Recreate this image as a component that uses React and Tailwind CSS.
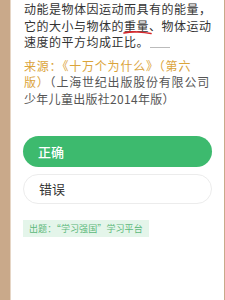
import React from 'react';

const cjk = { fontFamily: '"Noto Sans CJK SC", "Noto Sans", sans-serif' };

export default function App() {
  return (
    <div className="w-[225px] h-[300px] bg-[#c9a98a] flex pl-[10px] pr-[11px] overflow-hidden" style={cjk}>
      <div className="flex-1 bg-white border-l border-[#e6d6c6] flex flex-col px-[12px]">
        {/* question text */}
        <div className="pl-[1px] pt-[1px] text-[12px] leading-[16.5px] tracking-[0.5px] text-[#333] whitespace-nowrap">
          <div>动能是物体因运动而具有的能量，</div>
          <div>
            它的大小与物体的
            <span className="relative">
              重量
              <svg className="absolute left-[-1px] top-[13px]" width="29" height="5" viewBox="0 0 29 5">
                <path d="M1 3 Q8 1.5 15 2 T28 3.5" stroke="#d7262b" strokeWidth="1.6" fill="none" strokeLinecap="round" />
              </svg>
            </span>
            、物体运动
          </div>
          <div className="flex items-center">
            速度的平方均成正比。
            <span className="inline-block w-[20px] h-[1px] bg-[#bbb] mt-[10px] ml-[1px]" />
          </div>
        </div>

        {/* source */}
        <div className="mt-[7px] pl-[1px] text-[12px] leading-[16.5px] tracking-[0.8px] whitespace-nowrap">
          <div className="text-[#dba43a]">来源：《十万个为什么》（第六</div>
          <div>
            <span className="text-[#dba43a]">版）</span>
            <span className="text-[#555]">（上海世纪出版股份有限公司</span>
          </div>
          <div className="text-[#555] tracking-[0.3px]">少年儿童出版社2014年版）</div>
        </div>

        {/* options */}
        <button className="mt-[29px] h-[31px] w-full rounded-full bg-[#3dba6e] text-white text-[13px] font-medium text-left pl-[15px]">
          正确
        </button>
        <button className="mt-[7px] h-[30px] w-full rounded-full bg-white border border-[#ececec] text-[#333] text-[13px] text-left pl-[15px]">
          错误
        </button>

        {/* tag */}
        <div className="mt-[16px] self-start h-[17px] flex items-center px-[6px] bg-[#e4f5ea] text-[#5cb87a] text-[9px] tracking-[0.1px]">
          出题：“学习强国”学习平台
        </div>
      </div>
    </div>
  );
}
